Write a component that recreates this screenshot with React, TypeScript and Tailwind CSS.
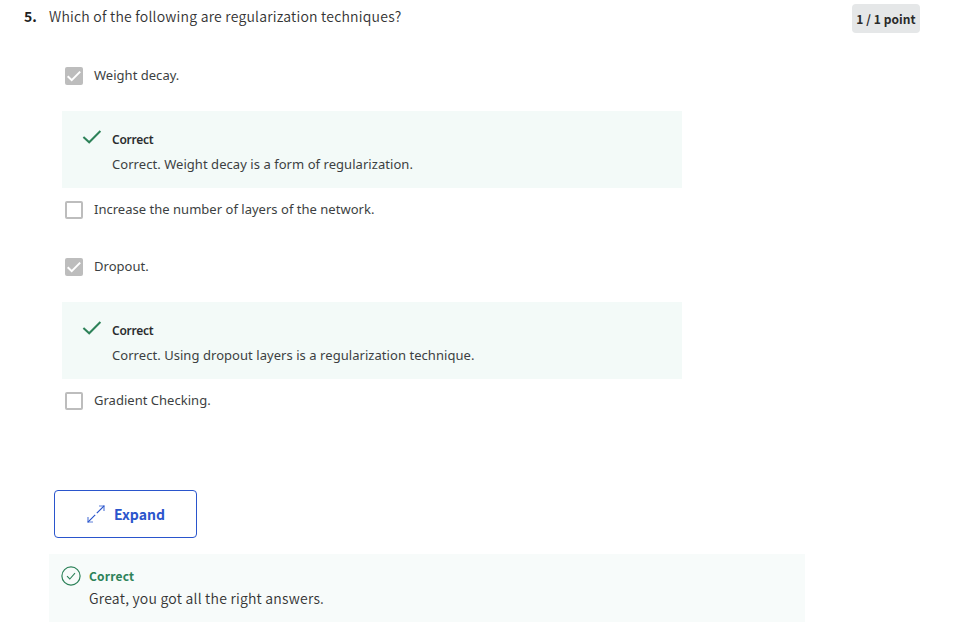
import React from "react";

function Checkbox({ checked }: { checked: boolean }) {
  return checked ? (
    <span className="flex h-[18px] w-[18px] shrink-0 items-center justify-center rounded-[2px] bg-[#bdbdbd]">
      <svg width="18" height="18" viewBox="0 0 18 18" fill="none" stroke="#fff" strokeWidth="2">
        <path d="M2.7 9.2 6.7 13.2 15.2 4.6" />
      </svg>
    </span>
  ) : (
    <span className="h-[18px] w-[18px] shrink-0 rounded-[2px] border-2 border-[#bdbdbd] bg-white" />
  );
}

function Option({ checked, label }: { checked: boolean; label: string }) {
  return (
    <label className="flex h-5 items-center gap-[11px] pl-[65px]">
      <Checkbox checked={checked} />
      <span className="-mt-0.5 whitespace-nowrap font-['Noto_Sans',sans-serif] text-[13px] leading-5 tracking-[0.02px] text-[#3c3f42]">{label}</span>
    </label>
  );
}

function Feedback({ text }: { text: string }) {
  return (
    <div className="ml-[62px] flex h-[77px] w-[620px] bg-[#f3faf8] pl-5 pt-[18px] font-['Noto_Sans',sans-serif]">
      <svg className="shrink-0" width="20" height="16" viewBox="0 0 20 16" fill="none" stroke="#2d8259" strokeWidth="2">
        <path d="M1.4 8 7.2 13.3 18.4 2" />
      </svg>
      <div className="ml-[10px] whitespace-nowrap">
        <div className="h-[25px] text-[12px] font-semibold leading-[21px] tracking-[-0.25px] text-[#2a2c2e]">Correct</div>
        <div className="text-[13px] leading-5 tracking-[0.05px] text-[#3c3f42]">{text}</div>
      </div>
    </div>
  );
}

export default function App() {
  return (
    <main className="h-[638px] w-[955px] overflow-hidden bg-white font-['Noto_Sans_CJK_SC','Noto_Sans',sans-serif]">
      <header className="flex h-[66px] items-start pl-6 pr-[35px] pt-1">
        <span className="w-[25px] text-[14px] font-bold leading-6 text-[#1f1f1f]">5.</span>
        <h1 className="whitespace-nowrap text-[14px] font-[350] leading-6 tracking-[0.22px] text-[#333]">
          Which of the following are regularization techniques?
        </h1>
        <span className="ml-auto flex h-[29px] w-[68px] items-center justify-center whitespace-nowrap rounded bg-[#e5e7e8] text-[12px] font-bold tracking-[0.08px] text-[#2a2a2a]">
          1 / 1 point
        </span>
      </header>

      <section>
        <Option checked label="Weight decay." />
        <div className="h-[25px]" />
        <Feedback text="Correct. Weight decay is a form of regularization." />
        <div className="h-3" />
        <Option checked={false} label="Increase the number of layers of the network." />
        <div className="h-[37px]" />
        <Option checked label="Dropout." />
        <div className="h-[25px]" />
        <Feedback text="Correct. Using dropout layers is a regularization technique." />
        <div className="h-3" />
        <Option checked={false} label="Gradient Checking." />
      </section>

      <button className="ml-[54px] mt-[79px] flex h-12 w-[143px] items-center rounded-[4px] border border-[#2a55cc] pl-[31px] text-[14px] font-bold text-[#2a55cc]">
        <svg width="20" height="20" viewBox="0 0 20 20" fill="none" stroke="#2a55cc" strokeWidth="1.2">
          <path d="M1.7 18.3 9.2 10.8M10.8 9.2 18.3 1.7" />
          <path d="M13 2h5v5M2 13v5h5" strokeOpacity="0.75" />
        </svg>
        <span className="ml-2">Expand</span>
      </button>

      <footer className="ml-[49px] mt-4 flex h-[68px] w-[756px] bg-[#f7fbfa] pl-3 pt-3">
        <svg className="shrink-0" width="20" height="20" viewBox="0 0 20 20" fill="none" stroke="#2d8259">
          <circle cx="10" cy="10" r="9.1" strokeWidth="1.2" />
          <path d="M6 10.2 8.8 13 14 7.2" strokeWidth="1.1" />
        </svg>
        <div className="ml-2 whitespace-nowrap">
          <div className="-mt-px text-[12px] font-bold leading-[21px] tracking-[0.2px] text-[#2d8259]">Correct</div>
          <div className="text-[14px] font-[350] leading-6 tracking-[0.22px] text-[#333]">Great, you got all the right answers.</div>
        </div>
      </footer>
    </main>
  );
}
